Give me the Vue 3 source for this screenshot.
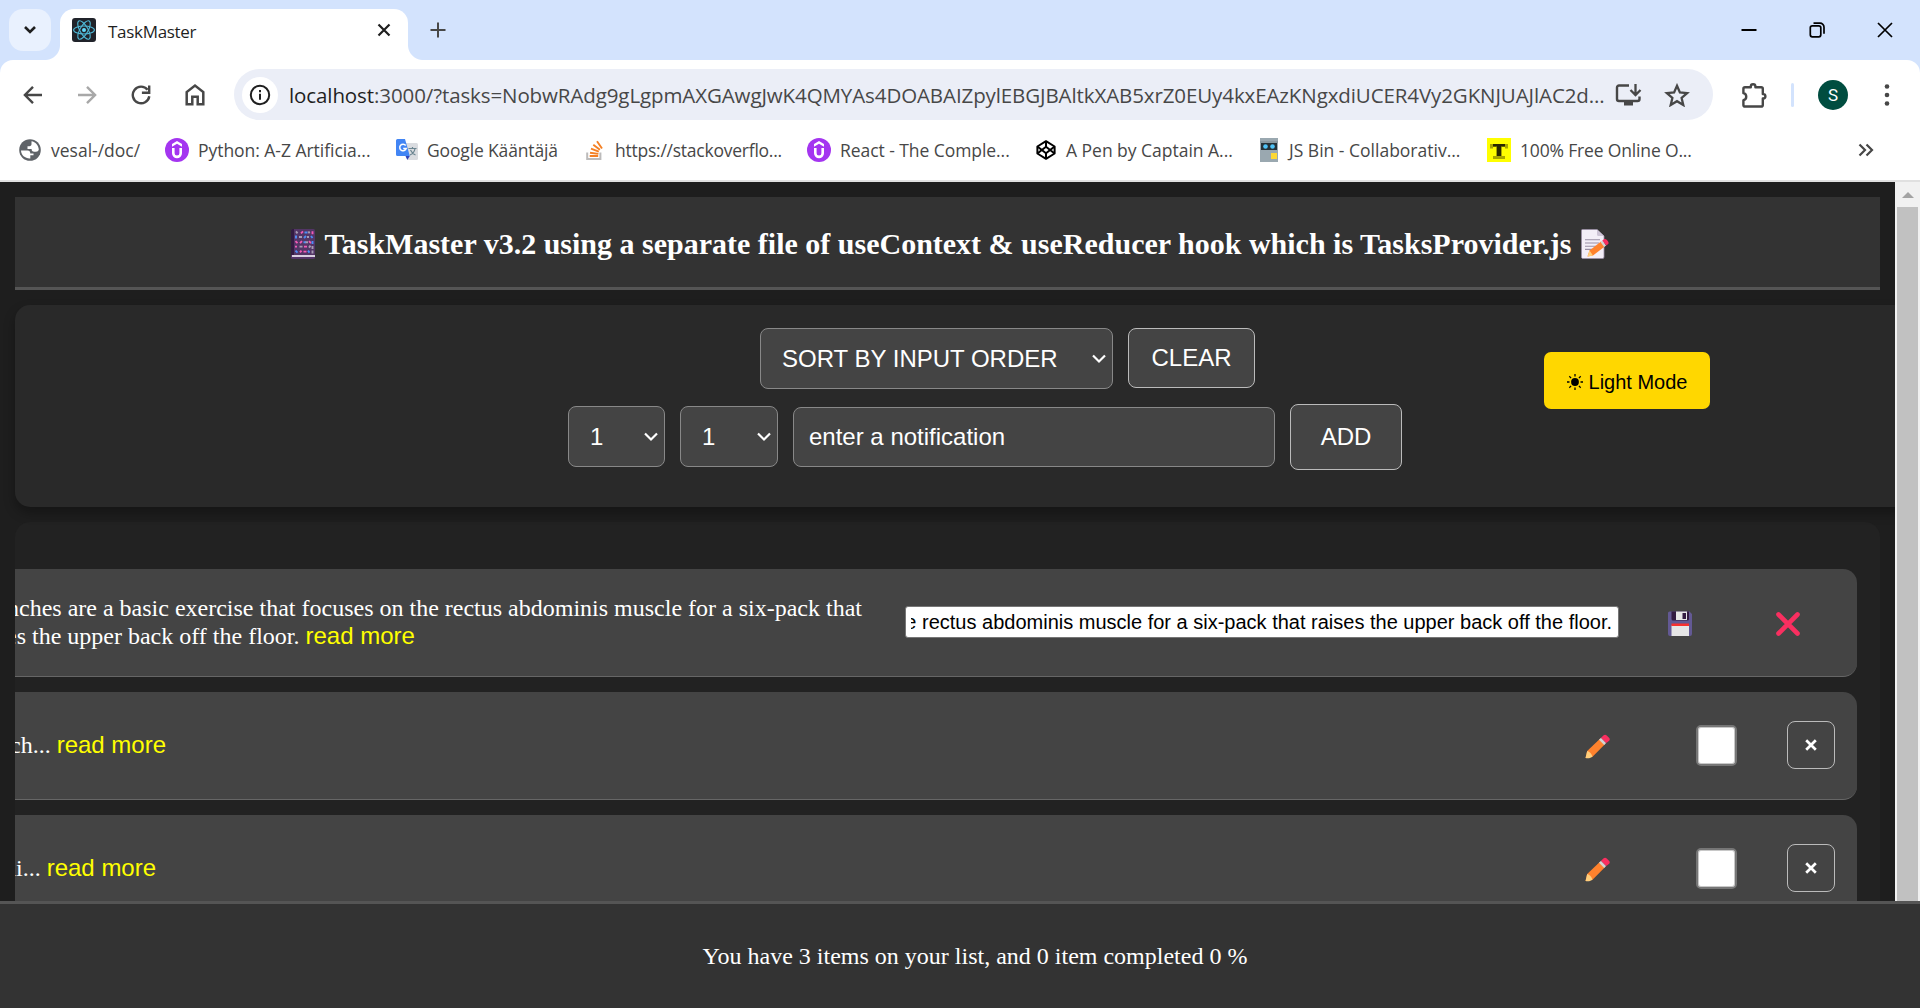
<script setup>
const bookmarks = [
  { icon: 'globe', label: 'vesal-/doc/' },
  { icon: 'udemy', label: 'Python: A-Z Artificia...' },
  { icon: 'translate', label: 'Google Kääntäjä' },
  { icon: 'stack', label: 'https://stackoverflo...' },
  { icon: 'udemy', label: 'React - The Comple...' },
  { icon: 'codepen', label: 'A Pen by Captain A...' },
  { icon: 'jsbin', label: 'JS Bin - Collaborativ...' },
  { icon: 'tee', label: '100% Free Online O...' }
]
const tasks = [
  { id: 2, text: 'ch...' },
  { id: 3, text: 'hi...' }
]
const path = ':3000/?tasks=NobwRAdg9gLgpmAXGAwgJwK4QMYAs4DOABAIZpylEBGJBAltkXAB5xrZ0EUy4kxEAzKNgxdiUCER4Vy2GKNJUAJlAC2d...'
</script>

<template>
  <div class="window">
    <div class="tabstrip">
      <div class="tab-search">
        <svg width="14" height="10" viewBox="0 0 14 10"><path d="M2 2l5 5 5-5" fill="none" stroke="#1f1f1f" stroke-width="2.6" /></svg>
      </div>
      <div class="tab">
        <svg class="favicon" width="24" height="24" viewBox="0 0 24 24">
          <rect width="24" height="24" rx="3" fill="#20232a" />
          <g fill="none" stroke="#4fb8d6" stroke-width="1.1">
            <ellipse cx="12" cy="12" rx="10.4" ry="4" />
            <ellipse cx="12" cy="12" rx="10.4" ry="4" transform="rotate(60 12 12)" />
            <ellipse cx="12" cy="12" rx="10.4" ry="4" transform="rotate(120 12 12)" />
          </g>
          <circle cx="12" cy="12" r="2" fill="#61dafb" />
        </svg>
        <span class="tab-title">TaskMaster</span>
        <svg class="tab-close" width="14" height="14" viewBox="0 0 14 14"><path d="M1.5 1.5l11 11M12.500 1.500l-11 11" stroke="#1f1f1f" stroke-width="2.2" /></svg>
      </div>
      <svg class="new-tab" width="16" height="16" viewBox="0 0 16 16"><path d="M8 0.500v15M0.500 8h15" stroke="#474747" stroke-width="2" /></svg>
      <div class="controls">
        <svg width="16" height="16" viewBox="0 0 16 16"><path d="M0.500 8h15" stroke="#000" stroke-width="2" /></svg>
        <svg width="16" height="16" viewBox="0 0 16 16" fill="none" stroke="#000" stroke-width="1.7"><rect x="1.300" y="3.800" width="10.500" height="11" rx="2" /><path d="M4.500 1.200h6.500a4 4 0 0 1 4 4v6.500" /></svg>
        <svg width="16" height="16" viewBox="0 0 16 16"><path d="M1 1l14 14M15 1l-14 14" stroke="#000" stroke-width="1.700" /></svg>
      </div>
    </div>

    <div class="toolbar">
      <svg class="nav back" width="20" height="20" viewBox="0 0 20 20"><path d="M19 10H2.500M10 1.800L1.900 10l8.100 8.200" fill="none" stroke="#474747" stroke-width="2.400" /></svg>
      <svg class="nav forward" width="20" height="20" viewBox="0 0 20 20"><path d="M1 10h16.500M10 1.800l8.100 8.200-8.100 8.200" fill="none" stroke="#a8a8a8" stroke-width="2.400" /></svg>
      <svg class="nav reload" width="20" height="20" viewBox="0 0 20 20"><path d="M18.300 11.200A8.300 8.300 0 1 1 16.600 4.800" fill="none" stroke="#474747" stroke-width="2.400" /><path d="M18.200 0.500v7.300h-7.300" fill="none" stroke="#474747" stroke-width="2.400" /></svg>
      <svg class="nav home" width="20" height="22" viewBox="0 0 20 22"><path d="M1.700 20.300V8L10 1.600 18.300 8v12.300h-5.600v-7.500H7.300v7.500z" fill="none" stroke="#474747" stroke-width="2.500" /></svg>
      <div class="omnibox">
        <div class="info">
          <svg width="22" height="22" viewBox="0 0 22 22"><circle cx="11" cy="11" r="9.200" fill="none" stroke="#1f1f1f" stroke-width="2" /><path d="M11 9.800v6M11 6v2.200" stroke="#1f1f1f" stroke-width="2" /></svg>
        </div>
        <span class="url"><span class="host">localhost</span>{{ path }}</span>
        <svg class="install" width="27" height="24" viewBox="0 0 27 24"><path d="M14 2.500H4a2 2 0 0 0-2 2V16a2 2 0 0 0 2 2h18.500a2 2 0 0 0 2-2v-2.500" fill="none" stroke="#474747" stroke-width="2.400" /><path d="M9 18h9v4.500H9z" fill="#474747" /><path d="M20.500 1v10.500M15.500 7l5 5 5-5" fill="none" stroke="#474747" stroke-width="2.300" /></svg>
        <svg class="star" width="26" height="24" viewBox="0 0 26 24"><path d="M13 2.800l2.900 6.700 7.200.6-5.500 4.800 1.700 7.100L13 18.200 6.700 22l1.700-7.100-5.500-4.800 7.200-.6z" fill="none" stroke="#474747" stroke-width="2.300" /></svg>
      </div>
      <svg class="puzzle" width="26" height="26" viewBox="0 0 26 26"><path d="M4 5.200h5.800V4.600a2.300 2.300 0 0 1 4.600 0v.6h5.800a1.600 1.600 0 0 1 1.600 1.600v5.300h.4a2.200 2.200 0 0 1 0 4.400h-.4v6.400a1.600 1.600 0 0 1-1.600 1.600H4a1.600 1.600 0 0 1-1.600-1.600v-4.700c3.800-.8 3.800-6.200 0-7V6.800A1.600 1.600 0 0 1 4 5.200z" fill="none" stroke="#474747" stroke-width="2.400" stroke-linejoin="round" /></svg>
      <div class="divider"></div>
      <div class="avatar">S</div>
      <svg class="dots" width="6" height="24" viewBox="0 0 6 24" fill="#474747"><circle cx="3" cy="3.500" r="2.300" /><circle cx="3" cy="12" r="2.300" /><circle cx="3" cy="20.500" r="2.300" /></svg>
    </div>

    <div class="bookmarks">
      <div v-for="(b, i) in bookmarks" :key="i" class="bookmark" :class="'bm-' + i">
        <svg v-if="b.icon === 'globe'" width="22" height="22" viewBox="0 0 22 22"><circle cx="11" cy="11" r="10.800" fill="#5f6368" /><path d="M2 11.500h6.500c2 0 2.800 1.200 2.800 3h3.200v1.800h-3.200v3.200c-5 .300-9.300-3.500-9.300-8zM12.500 2.200c4 .600 7 4 7.300 8.300-.4 1.500-1.300 2.200-2.800 2.200h-1.800c-1.800 0-2.600-1-2.600-2.800H8.500V7.200h1.800c1.500 0 2.200-.8 2.200-2.200z" fill="#fff" /></svg>
        <svg v-else-if="b.icon === 'udemy'" width="24" height="24" viewBox="0 0 24 24"><circle cx="12" cy="12" r="12" fill="#a435f0" /><path d="M12 3l5 3v2.700l-5-3-5 3V6z" fill="#fff" /><path d="M8.300 10v5.300c0 4.800 7.400 4.800 7.400 0V10" fill="none" stroke="#fff" stroke-width="2.600" /></svg>
        <svg v-else-if="b.icon === 'translate'" width="24" height="24" viewBox="0 0 24 24"><path d="M10 5h11.500a1.500 1.500 0 0 1 1.500 1.500v14a1.500 1.500 0 0 1-1.500 1.500H13z" fill="#dadce0" /><path d="M13.500 10.500h8M17.500 9v1.500M20 10.500c-.5 3-2.800 5.500-5 6.500M15.500 12c1 2.200 3 4.300 5 5" stroke="#6b8590" stroke-width="1.200" fill="none" /><path d="M2.500 1H10l4.800 17H2.500A1.500 1.500 0 0 1 1 16.500v-14A1.500 1.500 0 0 1 2.500 1z" fill="#4285f4" /><path d="M10.500 18h4.300l-2.500 4z" fill="#3043b8" /><path d="M10.700 7.500a3.300 3.300 0 1 0 .5 3H8.200" stroke="#fff" stroke-width="1.500" fill="none" /></svg>
        <svg v-else-if="b.icon === 'stack'" width="18" height="20" viewBox="0 0 18 20"><path d="M1.200 12.500v6.400h13.200v-6.400" fill="none" stroke="#bcbbbb" stroke-width="2" /><path d="M3.700 16h8.500M4 12.700l8.400 1.200M5 8.600l7.800 3M7.300 4.700l6.600 5.100M11 1.200l5 7.300" stroke="#f48024" stroke-width="1.900" /></svg>
        <svg v-else-if="b.icon === 'codepen'" width="20" height="20" viewBox="0 0 20 20" fill="none" stroke="#000" stroke-width="2" stroke-linejoin="round"><path d="M10 1.200l8.600 5.300v7L10 18.800 1.400 13.500v-7z" /><path d="M10 1.200v5.300M10 13.500v5.300M1.400 6.500L10 13.300l8.600-6.800M1.400 13.500L10 6.700l8.600 6.800" /></svg>
        <svg v-else-if="b.icon === 'jsbin'" width="18" height="24" viewBox="0 0 18 24"><rect width="18" height="24" fill="#9aa8b0" /><path d="M0 4h18" stroke="#7b8990" /><rect x="1" y="5" width="16" height="7" fill="#263238" /><circle cx="5.500" cy="8.500" r="2.300" fill="#4fc3f7" /><circle cx="12.500" cy="8.500" r="2.300" fill="#4fc3f7" /><rect x="11" y="15" width="6" height="6" fill="#fdd835" /></svg>
        <svg v-else width="24" height="24" viewBox="0 0 24 24"><rect width="24" height="24" fill="#ff0" /><path d="M3 6h18v4.500h-3V9h-3v9h3v3H6v-3h3V9H6v1.500H3z" fill="#a9a600" /><path d="M6 6h12v2.500h-4V18h-4V8.500H6z" fill="#292800" /></svg>
        <span>{{ b.label }}</span>
      </div>
      <svg class="more" width="16" height="14" viewBox="0 0 16 14"><path d="M1.500 1.500L7 7l-5.500 5.500M8.500 1.500L14 7l-5.500 5.500" fill="none" stroke="#474747" stroke-width="2.200" /></svg>
    </div>

    <div class="viewport">
      <main class="page">
        <header class="header">
          <svg width="24" height="30" viewBox="0 0 24 30">
            <rect width="24" height="30" rx="1.500" fill="#533566" /><path d="M0 1.500A1.500 1.500 0 0 1 1.500 0H3v26H0z" fill="#321b41" /><path d="M1 26h23v2H1z" fill="#d9cfe0" />
            <g fill="none" stroke-width="1.900">
              <path d="M10 4.400l2-2M21.500 2.200v3M4.500 12.200l2 2M9 14.200l2-2M18 12.200l2 2M13 17.600h3M4 17.600h2M12.500 22.600h3M9 23.400l1.500-1.800" stroke="#f15bb5" />
              <path d="M5 2.400l1.500 2M17.500 2.400l1 2M8 8h3M16 8h2M17 13.200h-3M8.500 17.600h3M5 8.500v-1.500M21.500 17v3M21.500 21.500v3M18 18.600l1.500-2" stroke="#a79cb3" />
              <path d="M13.500 3.500h3M5 6.500v3M13 9l2-2M20 7l1.500 2M12.500 13.200h2M21.500 12v3M4.500 21.600l2 2M17 21.600l1.500 2" stroke="#4d8df6" />
            </g>
          </svg>
          <h1>TaskMaster v3.2 using a separate file of useContext &amp; useReducer hook which is TasksProvider.js</h1>
          <svg width="28" height="30" viewBox="0 0 28 30">
            <path d="M1.500.500H16l7 6.500v21a1.500 1.500 0 0 1-1.500 1.500h-20A1.500 1.500 0 0 1 .500 28V1.500A1 1 0 0 1 1.500.500z" fill="#f3eef8" stroke="#998ea4" stroke-width=".8" /><path d="M16 .500L23 7h-5.500A1.500 1.500 0 0 1 16 5.500z" fill="#cdc4d6" /><path d="M4 10.800h15M4 14h14M4 17.200h11M4 20.400h7" stroke="#998ea4" stroke-width="1.100" />
            <path d="M6.500 27.500l2-6L20 12.500l3.800 5-11.800 9z" fill="#ff822d" /><path d="M6.500 27.500l2-6 3.500 5z" fill="#ffce7c" /><path d="M19.500 12.900l2-1.500 3.600 5-2 1.500z" fill="#d3d3d3" /><path d="M21.300 11.500l1.700-1.200c2-1.300 5.800 3.200 4.200 4.800l-2 1.500z" fill="#f92f60" />
          </svg>
        </header>

        <section class="panel">
          <div class="form">
            <div class="form-row sort-row">
              <div class="select sort">SORT BY INPUT ORDER
                <svg width="14" height="10" viewBox="0 0 14 10"><path d="M1 1.500l6 6 6-6" fill="none" stroke="#fff" stroke-width="2.200" /></svg>
              </div>
              <button class="btn clear">CLEAR</button>
            </div>
            <div class="form-row add-row">
              <div v-for="n in 2" :key="n" class="select num" :class="'num-' + n">1
                <svg width="14" height="10" viewBox="0 0 14 10"><path d="M1 1.500l6 6 6-6" fill="none" stroke="#fff" stroke-width="2.200" /></svg>
              </div>
              <div class="field">enter a notification</div>
              <button class="btn add">ADD</button>
            </div>
          </div>
          <button class="light">
            <svg width="16" height="16" viewBox="0 0 16 16"><circle cx="8" cy="8" r="3.900" /><path d="M8 0v2.500M8 13.500V16M0 8h2.500M13.500 8H16M2.300 2.300l1.800 1.800M11.900 11.900l1.800 1.800M2.300 13.700l1.800-1.800M11.900 4.100l1.800-1.800" stroke="#000" stroke-width="1.300" /></svg>
            <span>Light Mode</span>
          </button>
        </section>

        <section class="list">
          <article class="task">
            <p class="text first">nches are a basic exercise that focuses on the rectus abdominis muscle for a six-pack that<br><span class="second">es the upper back off the floor. <a>read more</a></span></p>
            <div class="edit"><div class="edit-inner">e rectus abdominis muscle for a six-pack that raises the upper back off the floor.</div></div>
            <svg class="save" width="24" height="25" viewBox="0 0 24 25">
              <path d="M1.500.500h20L24 3v20a2 2 0 0 1-2 2H2a2 2 0 0 1-2-2V2A1.500 1.500 0 0 1 1.500.500z" fill="#635994" /><path d="M3.500.500H21V8a1.500 1.500 0 0 1-1.500 1.500H5A1.500 1.500 0 0 1 3.500 8z" fill="#321b41" /><path d="M8 .500h11V9H8z" fill="#e6e6e6" /><path d="M14.500 2H18v6h-3.500z" fill="#321b41" /><path d="M3.500 14.500H21V25H3.500z" fill="#e6e6e6" /><path d="M3.500 12.500H21V15H3.500z" fill="#f8312f" />
            </svg>
            <svg class="cancel" width="24" height="24" viewBox="0 0 24 24"><path d="M2.500 2.500l19 19M21.500 2.500l-19 19" stroke="#f92f60" stroke-width="4.600" stroke-linecap="round" /></svg>
          </article>
          <article v-for="t in tasks" :key="t.id" class="task">
            <p class="text short" :class="'t-' + t.id">{{ t.text }} <a>read more</a></p>
            <svg class="pencil" width="25" height="25" viewBox="0 0 25 25"><path d="M.500 24l1.700-7L15 4.700l5.200 5.200L7.500 22.800z" fill="#ff822d" /><path d="M.500 24l1.700-7c2.500.800 4.500 2.700 5.300 5.800-1.500 1.200-4.500 2-7 1.200z" fill="#ffce7c" /><path d="M14 5.700l2-2 5.200 5.200-2 2z" fill="#d3d3d3" /><path d="M16 3.700L18.700 1.200c1.200-1 2.300-.5 3.300.5l2 2c1 1 1 2.100.2 3l-3 2.200z" fill="#f92f60" /></svg>
            <div class="check"></div>
            <button class="del"><svg width="12" height="12" viewBox="0 0 12 12"><path d="M1.200 1.200l9.600 9.600M10.800 1.200l-9.600 9.600" stroke="#fff" stroke-width="2.700" /></svg></button>
          </article>
        </section>
      </main>
      <div class="scrollbar">
        <svg width="12" height="6" viewBox="0 0 12 6"><path d="M6 0l6 6H0z" fill="#a3a3a3" /></svg>
        <div class="thumb"></div>
      </div>
    </div>
    <footer class="footer">You have 3 items on your list, and 0 item completed 0 %</footer>
  </div>
</template>

<style>
html, body { margin: 0; overflow: hidden; }
</style>

<style scoped>
* { box-sizing: border-box; }
svg { display: block; flex: none; }
button { font: inherit; padding: 0; margin: 0; }
.window { width: 1920px; height: 1008px; display: flex; flex-direction: column; overflow: hidden; background: #d3e3fd; font-family: "Open Sans", "Noto Sans", sans-serif; }
.tabstrip { flex: none; height: 60px; display: flex; padding: 9px 27px 0 9px; }
.tab-search { width: 42px; height: 42px; border-radius: 14px; background: #e9f1fe; display: flex; align-items: center; justify-content: center; }
.tab { position: relative; width: 348px; height: 51px; margin-left: 9px; padding: 0 17px 0 12px; display: flex; background: #fff; border-radius: 14px 14px 0 0; }
.tab::before, .tab::after { content: ""; position: absolute; bottom: 0; width: 15px; height: 15px; }
.tab::before { left: -15px; background: radial-gradient(circle at 0 0, transparent 14.500px, #fff 15.500px); }
.tab::after { right: -15px; background: radial-gradient(circle at 100% 0, transparent 14.500px, #fff 15.500px); }
.favicon { margin-top: 9px; }
.tab-title { flex: 1; margin-left: 12px; margin-top: 11px; font-size: 17px; line-height: 24px; color: #1f1f1f; letter-spacing: -0.300px; }
.tab-close { margin-top: 14px; }
.new-tab { margin: 13px 0 0 22px; }
.controls { margin: 13px 0 0 auto; display: flex; gap: 52px; }
.toolbar { flex: none; height: 69px; background: #fff; border-radius: 13px 13px 0 0; display: flex; align-items: center; }
.back { margin-left: 23px; }
.forward { margin-left: 34px; }
.reload { margin-left: 34px; }
.home { margin-left: 34px; }
.omnibox { width: 1479px; height: 51px; margin-left: 29px; border-radius: 26px; background: #ebeef7; display: flex; align-items: center; }
.info { flex: none; width: 36px; height: 36px; margin-left: 8px; border-radius: 50%; background: #fff; display: flex; align-items: center; justify-content: center; }
.url { width: 1326px; margin-left: 11px; font-size: 20.500px; line-height: 30px; color: #474747; white-space: nowrap; letter-spacing: -0.100px; }
.host { color: #1f1f1f; }
.star { margin-left: 22px; }
.puzzle { margin-left: 28px; }
.divider { width: 3px; height: 24px; margin-left: 24px; border-radius: 2px; background: #d3e3fd; }
.avatar { width: 30px; height: 30px; margin-left: 24px; border-radius: 50%; background: #004d40; color: #fff; font: 17px/30px Roboto, sans-serif; text-align: center; }
.dots { margin-left: 36px; }
.bookmarks { flex: none; position: relative; height: 53px; background: #fff; border-bottom: 2px solid #e0e0e0; padding: 0 46px 10px 19px; display: grid; grid-template-columns: 146px 230px 191px 221px 229px 224px 227px 1fr 16px; align-items: center; }
.bookmark { display: flex; align-items: center; gap: 9px; height: 26px; font-size: 17.500px; line-height: 26px; color: #474747; white-space: nowrap; letter-spacing: -0.060px; }
.bm-0 { gap: 10px; letter-spacing: 0; }
.bm-1 { letter-spacing: -0.040px; }
.bm-2 { gap: 8px; letter-spacing: -0.150px; }
.bm-3 { gap: 11px; letter-spacing: -0.240px; }
.bm-5 { gap: 10px; letter-spacing: -0.020px; }
.bm-6 { gap: 11px; letter-spacing: 0; }
.bm-7 { letter-spacing: -0.160px; }
.viewport { flex: none; height: 719px; display: flex; background: #1e1e1e; }
.page { width: 1895px; height: 719px; overflow: hidden; padding: 15px 0 0 15px; font-family: "Liberation Sans", Arial, sans-serif; color: #fff; }
.header { width: 1865px; height: 93px; display: flex; align-items: center; justify-content: center; gap: 9px; background: #333; border-bottom: 3px solid #555; padding-top: 4px; padding-left: 5px; }
.header h1 { margin: 0; font: bold 30px/36px "Liberation Serif", serif; white-space: nowrap; }
.panel { position: relative; z-index: 1; width: 1895px; height: 202px; margin-top: 15px; border-radius: 15px; background: #292929; box-shadow: 0 6px 12px rgba(0, 0, 0, 0.3); display: flex; padding-top: 23px; }
.form { margin-left: 553px; width: 834px; }
.form-row { display: flex; align-items: center; gap: 15px; font-size: 24px; }
.sort-row { margin-left: 192px; height: 61px; align-items: flex-start; }
.add-row { height: 66px; margin-top: 15px; }
.select, .field { background: #444; border: 1px solid #888; border-radius: 8px; height: 61px; display: flex; align-items: center; justify-content: space-between; white-space: nowrap; }
.sort { width: 353px; padding: 0 6px 0 21px; }
.num { width: 97px; padding: 0 6px 0 21px; margin-top: -1px; }
.num-2 { width: 98px; }
.field { width: 482px; height: 60px; padding: 0 15px 1px; }
.btn { background: #444; color: #fff; border: 1px solid #bbb; border-radius: 8px; font-size: 24px; }
.clear { width: 127px; height: 60px; }
.add { width: 112px; height: 66px; }
.light { width: 166px; height: 57px; margin: 24px 0 0 142px; border: 0; border-radius: 7px; background: gold; color: #000; font-size: 20px; display: flex; align-items: center; justify-content: center; gap: 6px; padding-top: 4px; }
.light svg { margin-top: -1px; }
.list { width: 1865px; height: 420px; margin-top: 15px; border-radius: 15px 15px 0 0; background: #222; padding: 47px 23px 0 0; overflow: hidden; }
.task { height: 108px; margin-bottom: 15px; background: #444; border-bottom: 1px solid #666; border-radius: 0 14px 14px 0; display: flex; align-items: center; padding-right: 22px; overflow: hidden; }
.text { flex: 1; margin: 0; font: 24px/28px "Liberation Serif", serif; white-space: nowrap; }
.text a { font-family: "Liberation Sans", Arial, sans-serif; color: #ff0; }
.first { flex: none; width: 898px; margin-left: -8px; margin-top: -2px; }
.second { margin-left: -1px; }
.short { margin-top: -2px; }
.t-2 { margin-left: -5px; }
.t-3 { margin-left: -11px; }
.edit { width: 714px; height: 32px; margin-top: -1px; background: #fff; border: 1px solid #767676; border-radius: 3px; padding: 0 6px 0 5px; color: #000; font-size: 20px; line-height: 30px; white-space: nowrap; }
.edit-inner { display: flex; justify-content: flex-end; overflow: hidden; }
.save { margin-left: 49px; margin-top: 2px; }
.cancel { margin-left: 84px; margin-top: 2px; }
.pencil { margin-right: 86px; margin-top: 1px; }
.check { width: 41px; height: 41px; border: 2px solid #767676; border-radius: 5px; background: #fff; box-shadow: inset 0 0 0 1px #c8c8c8; margin-right: 50px; }
.del { width: 48px; height: 48px; margin-top: -1px; border: 1px solid #bbb; border-radius: 8px; background: transparent; display: flex; align-items: center; justify-content: center; }
.scrollbar { width: 25px; background: #f1f1f1; display: flex; flex-direction: column; align-items: center; padding-top: 10px; }
.thumb { width: 21px; flex: 1; margin-top: 9px; background: #c1c1c1; }
.footer { flex: none; height: 107px; background: #333; border-top: 3px solid #555; color: #fff; font: 24px/104px "Liberation Serif", serif; text-align: center; padding-left: 30px; }
</style>
